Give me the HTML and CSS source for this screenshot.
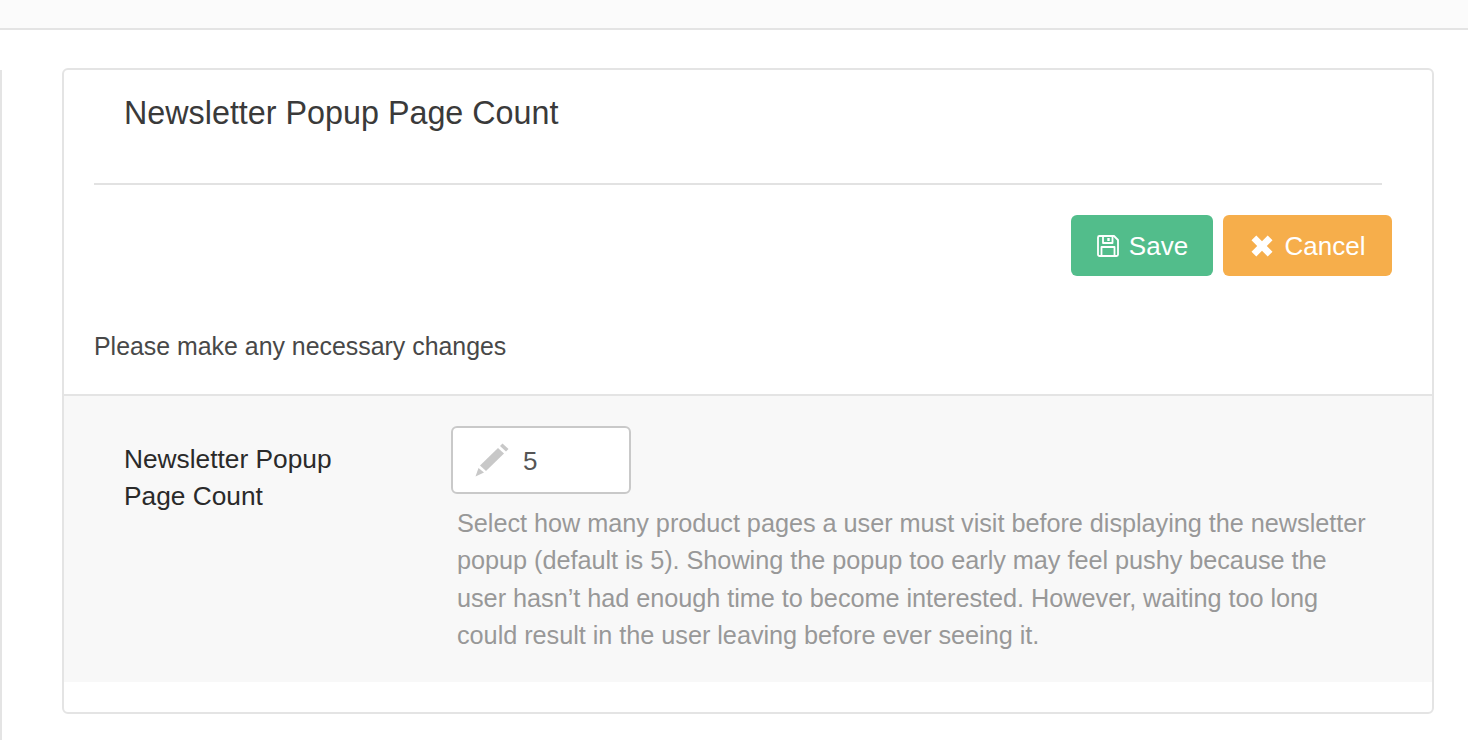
FILE: index.html
```html
<!DOCTYPE html>
<html lang="en">
<head>
<meta charset="utf-8">
<title>Newsletter Popup Page Count</title>
<link rel="stylesheet" href="styles.css">
</head>
<body>
<header class="topbar"></header>
<div class="shell">
  <aside class="sidebar"></aside>
  <main class="card">
    <h1 class="title">Newsletter Popup Page Count</h1>
    <hr class="rule">
    <div class="actions">
      <button class="btn btn-save" type="button">
        <svg class="icon" viewBox="0 0 24 24" width="24" height="24" fill="none" stroke="currentColor" stroke-width="1.8" stroke-linejoin="round"><path d="M2 3.500A1.500 1.500 0 0 1 3.500 2H18l4 4v14.500a1.500 1.500 0 0 1-1.500 1.500h-17A1.500 1.500 0 0 1 2 20.500Z"/><path d="M7 2v7h9.500V2"/><path d="M5.500 22v-9h13v9"/><path d="M12.500 4v3" stroke-width="2.400"/></svg>
        <span>Save</span>
      </button>
      <button class="btn btn-cancel" type="button">
        <svg class="icon" viewBox="0 0 24 24" width="24" height="24" fill="currentColor"><path d="M6.300 1.500 12 7.200l5.700-5.700 4.800 4.800-5.700 5.700 5.700 5.700-4.800 4.800-5.700-5.700-5.700 5.700-4.800-4.800 5.700-5.700-5.700-5.700Z"/></svg>
        <span>Cancel</span>
      </button>
    </div>
    <p class="intro">Please make any necessary changes</p>
    <section class="row">
      <label class="label" for="count">Newsletter Popup Page Count</label>
      <div class="field">
        <div class="input">
          <svg class="pencil" viewBox="0 0 34 34" width="34" height="34" fill="#c8c8c8"><path d="M27.500 0.500 33.500 6l-2.500 2.500-6-5.500Z"/><path d="M23 5l6 5.500L11 28l-6-5.500Z"/><path d="M3.500 25l5.500 4.500L0.500 33.500Z"/></svg>
          <span class="value" id="count">5</span>
        </div>
        <p class="help">Select how many product pages a user must visit before displaying the newsletter popup (default is 5). Showing the popup too early may feel pushy because the user hasn’t had enough time to become interested. However, waiting too long could result in the user leaving before ever seeing it.</p>
      </div>
    </section>
  </main>
</div>
</body>
</html>
```
FILE: styles.css
```css
* { box-sizing: border-box; }
html, body { margin: 0; height: 100%; overflow: hidden; }
body {
  background: #fff;
  color: #333;
  font-family: "Liberation Sans", Arial, sans-serif;
}
.topbar {
  height: 30px;
  background: #fbfbfb;
  border-bottom: 2px solid #e4e4e4;
}
.shell {
  display: flex;
  padding-top: 38px;
  gap: 60px;
}
.sidebar {
  width: 2px;
  height: 672px;
  margin-top: 2px;
  background: #e4e4e4;
}
.card {
  width: 1372px;
  height: 646px;
  border: 2px solid #e4e4e4;
  border-radius: 6px;
  background: #fff;
}
.title {
  margin: 0;
  padding: 24px 0 0 60px;
  height: 113px;
  font-size: 32.300px;
  line-height: 38px;
  font-weight: 400;
  color: #3a3a3a;
}
.rule {
  margin: 0 50px 0 30px;
  height: 2px;
  border: 0;
  background: #e2e2e2;
}
.actions {
  display: flex;
  justify-content: flex-end;
  gap: 10px;
  padding: 30px 40px 0 0;
}
.btn {
  display: flex;
  align-items: center;
  justify-content: center;
  height: 61px;
  border: 0;
  border-radius: 6px;
  color: #fff;
  font: 400 26px/32px "Liberation Sans", Arial, sans-serif;
}
.btn-save { width: 142px; gap: 9px; background: #52bd8b; }
.btn-cancel { width: 169px; gap: 11px; background: #f6ae4b; }
.intro {
  margin: 0;
  padding: 54px 0 32px 30px;
  height: 118px;
  font-size: 24.900px;
  line-height: 32px;
  color: #484848;
}
.row {
  display: flex;
  height: 288px;
  padding-top: 30px;
  border-top: 2px solid #e4e4e4;
  background: #f8f8f8;
}
.label {
  width: 387px;
  padding: 15px 100px 0 60px;
  font-size: 26.300px;
  line-height: 37px;
  color: #2a2a2a;
}
.field { width: 930px; }
.input {
  display: flex;
  align-items: center;
  width: 180px;
  height: 68px;
  padding-left: 22px;
  gap: 14px;
  border: 2px solid #c9c9c9;
  border-radius: 6px;
  background: #fff;
}
.value { padding-top: 2px; font-size: 26px; color: #555; }
.help {
  margin: 11px 0 0;
  padding-left: 6px;
  font-size: 25.300px;
  line-height: 37.300px;
  letter-spacing: -0.050px;
  color: #989898;
}
```
